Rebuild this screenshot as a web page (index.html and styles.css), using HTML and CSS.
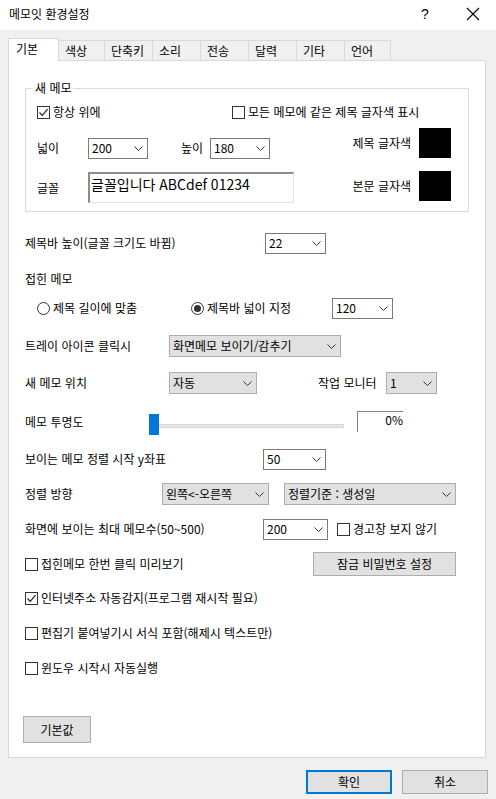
FILE: index.html
```html
<!DOCTYPE html>
<html lang="ko">
<head>
    <meta charset="UTF-8">
    <meta name="viewport" content="width=device-width, initial-scale=1.0">
    <title>메모잇 환경설정</title>
    <link rel="stylesheet" href="styles.css">
</head>
<body>

    <!-- Title bar -->
    <div class="titlebar">
        <span class="title">메모잇 환경설정</span>
        <span class="help">?</span>
        <span class="close">
            <svg width="14" height="14" viewBox="0 0 14 14"><path d="M1 1L13 13M13 1L1 13" stroke="#000" stroke-width="1.1" fill="none"/></svg>
        </span>
    </div>

    <!-- Tabs -->
    <div class="tabs">
        <div class="tab active t50">기본</div>
        <div class="tab t46">색상</div>
        <div class="tab t48">단축키</div>
        <div class="tab t48">소리</div>
        <div class="tab t48">전송</div>
        <div class="tab t48">달력</div>
        <div class="tab t48">기타</div>
        <div class="tab t46">언어</div>
    </div>

    <!-- Basic settings page -->
    <div class="panel">

        <fieldset class="group">
            <legend>새 메모</legend>
            <div class="group-top">
                <label class="check always-top"><span class="box"><svg width="11" height="11" viewBox="0 0 11 11"><path d="M1.5 5.5L4.2 8.3L9.6 2.2" stroke="#222" stroke-width="1.2" fill="none"/></svg></span>항상 위에</label>
                <label class="check"><span class="box"></span>모든 메모에 같은 제목 글자색 표시</label>
            </div>
            <div class="group-body">
                <div class="group-left">
                    <div class="size-row">
                        <span class="lbl-short">넓이</span>
                        <div class="combo w60"><span>200</span><svg class="chev" width="9" height="5" viewBox="0 0 9 5"><path d="M0.5 0.5L4.5 4.5L8.5 0.5" stroke="#333" fill="none"/></svg></div>
                        <span class="lbl-height">높이</span>
                        <div class="combo w60"><span>180</span><svg class="chev" width="9" height="5" viewBox="0 0 9 5"><path d="M0.5 0.5L4.5 4.5L8.5 0.5" stroke="#333" fill="none"/></svg></div>
                    </div>
                    <div class="font-row">
                        <span class="lbl-short">글꼴</span>
                        <div class="font-box">글꼴입니다 ABCdef 01234</div>
                    </div>
                </div>
                <div class="group-right">
                    <div class="color-row"><span>제목 글자색</span><span class="swatch"></span></div>
                    <div class="color-row"><span>본문 글자색</span><span class="swatch"></span></div>
                </div>
            </div>
        </fieldset>

        <div class="row r-titlebar">
            <span class="lbl w240">제목바 높이(글꼴 크기도 바뀜)</span>
            <div class="combo w61"><span>22</span><svg class="chev" width="9" height="5" viewBox="0 0 9 5"><path d="M0.5 0.5L4.5 4.5L8.5 0.5" stroke="#333" fill="none"/></svg></div>
        </div>

        <div class="row r-folded">
            <span class="lbl">접힌 메모</span>
        </div>

        <div class="row r-radios">
            <label class="radio first"><span class="dot"></span>제목 길이에 맞춤</label>
            <label class="radio"><span class="dot on"></span>제목바 넓이 지정</label>
            <div class="combo w61 fold-width"><span>120</span><svg class="chev" width="9" height="5" viewBox="0 0 9 5"><path d="M0.5 0.5L4.5 4.5L8.5 0.5" stroke="#333" fill="none"/></svg></div>
        </div>

        <div class="row r-tray">
            <span class="lbl w144">트레이 아이콘 클릭시</span>
            <div class="combo list w172"><span>화면메모 보이기/감추기</span><svg class="chev" width="9" height="5" viewBox="0 0 9 5"><path d="M0.5 0.5L4.5 4.5L8.5 0.5" stroke="#333" fill="none"/></svg></div>
        </div>

        <div class="row r-position">
            <span class="lbl w144">새 메모 위치</span>
            <div class="combo list w88"><span>자동</span><svg class="chev" width="9" height="5" viewBox="0 0 9 5"><path d="M0.5 0.5L4.5 4.5L8.5 0.5" stroke="#333" fill="none"/></svg></div>
            <span class="lbl monitor-lbl">작업 모니터</span>
            <div class="combo list w51"><span>1</span><svg class="chev" width="9" height="5" viewBox="0 0 9 5"><path d="M0.5 0.5L4.5 4.5L8.5 0.5" stroke="#333" fill="none"/></svg></div>
        </div>

        <div class="row r-opacity">
            <span class="lbl w124">메모 투명도</span>
            <div class="slider">
                <div class="track"></div>
                <div class="thumb"></div>
            </div>
            <div class="percent">0%</div>
        </div>

        <div class="row r-ystart">
            <span class="lbl w238">보이는 메모 정렬 시작 y좌표</span>
            <div class="combo w63"><span>50</span><svg class="chev" width="9" height="5" viewBox="0 0 9 5"><path d="M0.5 0.5L4.5 4.5L8.5 0.5" stroke="#333" fill="none"/></svg></div>
        </div>

        <div class="row r-sort">
            <span class="lbl w137">정렬 방향</span>
            <div class="combo list w107"><span>왼쪽&lt;-오른쪽</span><svg class="chev" width="9" height="5" viewBox="0 0 9 5"><path d="M0.5 0.5L4.5 4.5L8.5 0.5" stroke="#333" fill="none"/></svg></div>
            <div class="combo list w172 sort-by"><span>정렬기준 : 생성일</span><svg class="chev" width="9" height="5" viewBox="0 0 9 5"><path d="M0.5 0.5L4.5 4.5L8.5 0.5" stroke="#333" fill="none"/></svg></div>
        </div>

        <div class="row r-max">
            <span class="lbl w238">화면에 보이는 최대 메모수(50~500)</span>
            <div class="combo w65"><span>200</span><svg class="chev" width="9" height="5" viewBox="0 0 9 5"><path d="M0.5 0.5L4.5 4.5L8.5 0.5" stroke="#333" fill="none"/></svg></div>
            <label class="check no-warn"><span class="box"></span>경고창 보지 않기</label>
        </div>

        <div class="row r-preview">
            <label class="check"><span class="box"></span>접힌메모 한번 클릭 미리보기</label>
            <button class="btn lock-btn">잠금 비밀번호 설정</button>
        </div>

        <div class="row r-url">
            <label class="check"><span class="box"><svg width="11" height="11" viewBox="0 0 11 11"><path d="M1.5 5.5L4.2 8.3L9.6 2.2" stroke="#222" stroke-width="1.2" fill="none"/></svg></span>인터넷주소 자동감지(프로그램 재시작 필요)</label>
        </div>

        <div class="row r-paste">
            <label class="check"><span class="box"></span>편집기 붙여넣기시 서식 포함(해제시 텍스트만)</label>
        </div>

        <div class="row r-startup">
            <label class="check"><span class="box"></span>윈도우 시작시 자동실행</label>
        </div>

        <button class="btn default-btn">기본값</button>
    </div>

    <!-- Dialog buttons -->
    <div class="dialog-buttons">
        <button class="btn ok-btn">확인</button>
        <button class="btn cancel-btn">취소</button>
    </div>

</body>
</html>
```

FILE: styles.css
```css
* {
    box-sizing: border-box;
}

body {
    margin: 0;
    width: 496px;
    height: 799px;
    background-color: #f0f0f0;
    font-family: "Noto Sans CJK KR", "Noto Sans", sans-serif;
    font-size: 12px;
    line-height: 16px;
    color: #000;
    overflow: hidden;
}

/* Title bar */
.titlebar {
    height: 30px;
    background: #fff;
    display: flex;
    align-items: center;
    padding-left: 9px;
}

.title {
    flex: 1;
    margin-top: -2px;
}

.help {
    width: 14px;
    margin-right: 31px;
    font-family: "Liberation Sans", sans-serif;
    font-size: 14px;
    margin-top: -2px;
}

.close {
    width: 14px;
    height: 14px;
    margin-right: 16px;
    margin-top: -3px;
}

.close svg {
    display: block;
}

/* Tabs */
.tabs {
    display: flex;
    align-items: flex-end;
    height: 22px;
    margin-top: 8px;
    padding-left: 8px;
    position: relative;
    z-index: 1;
}

.tab {
    height: 20px;
    padding-left: 6px;
    border: 1px solid #d9d9d9;
    border-bottom: none;
    margin-left: -1px;
    background: #f0f0f0;
    line-height: 19px;
}

.tab.active {
    height: 23px;
    margin-left: 0;
    margin-bottom: -1px;
    background: #fff;
    padding-left: 7px;
    line-height: 19px;
}

.t50 { width: 51px; }
.t46 { width: 47px; }
.t48 { width: 49px; }

/* Page */
.panel {
    margin-left: 8px;
    width: 478px;
    height: 698px;
    background: #fff;
    border: 1px solid #d9d9d9;
    padding: 0 16px 14px;
    display: flex;
    flex-direction: column;
}

/* Group box */
.group {
    margin: 19px 0 0;
    padding: 0 17px 8px 11px;
    border: 1px solid #dcdcdc;
    min-width: 0;
}

.group legend {
    margin-left: -4px;
    padding: 0 2px;
    line-height: 16px;
}

.group-top {
    height: 32px;
    display: flex;
    align-items: center;
}

.always-top {
    width: 195px;
}

.group-body {
    display: flex;
    justify-content: space-between;
}

.size-row {
    height: 40px;
    display: flex;
    align-items: center;
}

.font-row {
    margin-top: 4px;
    display: flex;
    align-items: center;
}

.lbl-short {
    width: 51px;
}

.lbl-height {
    margin-left: 33px;
    width: 29px;
}

.font-box {
    width: 206px;
    height: 31px;
    border-style: solid;
    border-width: 2px 1px 1px 2px;
    border-color: #8c8c8c #e3e3e3 #e3e3e3 #8c8c8c;
    font-size: 14px;
    line-height: 18px;
    padding: 1px 0 0 1px;
}

.group-right {
    display: flex;
    flex-direction: column;
    gap: 13px;
}

.color-row {
    height: 30px;
    display: flex;
    align-items: center;
    justify-content: flex-end;
    gap: 8px;
}

.swatch {
    width: 32px;
    height: 30px;
    background: #000;
}

/* Rows */
.row {
    height: 24px;
    display: flex;
    align-items: center;
    flex-shrink: 0;
}

.r-titlebar { margin-top: 19px; }
.r-folded { margin-top: 12px; }
.r-radios { margin-top: 5px; padding-left: 12px; }
.r-tray { margin-top: 14px; }
.r-position { margin-top: 13px; }
.r-opacity { margin-top: 15px; }
.r-ystart { margin-top: 13px; }
.r-sort { margin-top: 11px; }
.r-max { margin-top: 11px; }
.r-preview { margin-top: 11px; }
.r-url { margin-top: 10px; }
.r-paste { margin-top: 11px; }
.r-startup { margin-top: 11px; }

.w124 { width: 124px; }
.w137 { width: 137px; }
.w144 { width: 144px; }
.w238 { width: 238px; }
.w240 { width: 240px; }

/* Combo boxes */
.combo {
    height: 21px;
    display: flex;
    align-items: center;
    justify-content: space-between;
    border: 1px solid #7a7a7a;
    background: #fff;
    padding: 0 4px 0 3px;
    white-space: nowrap;
}

.combo.list {
    height: 22px;
    background: #e1e1e1;
    border-color: #adadad;
}

.chev {
    display: block;
    flex-shrink: 0;
}

.w51 { width: 51px; }
.w60 { width: 60px; }
.w61 { width: 61px; }
.w63 { width: 63px; }
.w65 { width: 65px; }
.w88 { width: 88px; }
.w107 { width: 107px; }
.w172 { width: 172px; }

.fold-width {
    margin-left: auto;
    margin-right: 76px;
}

.monitor-lbl {
    margin-left: 61px;
    width: 68px;
}

.sort-by {
    margin-left: 15px;
}

/* Checkboxes and radios */
.check,
.radio {
    display: flex;
    align-items: center;
    white-space: nowrap;
}

.box {
    width: 13px;
    height: 13px;
    border: 1px solid #333;
    background: #fff;
    margin-right: 3px;
    display: flex;
    align-items: center;
    justify-content: center;
}

.box svg {
    display: block;
}

.dot {
    width: 13px;
    height: 13px;
    border: 1px solid #333;
    border-radius: 50%;
    margin-right: 3px;
    position: relative;
}

.dot.on::after {
    content: "";
    position: absolute;
    left: 2px;
    top: 2px;
    width: 7px;
    height: 7px;
    border-radius: 50%;
    background: #333;
}

.radio.first {
    width: 154px;
}

.no-warn {
    margin-left: 9px;
}

/* Opacity slider */
.slider {
    position: relative;
    width: 195px;
    height: 24px;
    margin-top: 8px;
}

.track {
    margin-top: 10px;
    height: 4px;
    background: #e7e7e7;
    border: 1px solid #d6d6d6;
}

.thumb {
    position: absolute;
    left: 0;
    top: 0;
    width: 10px;
    height: 21px;
    background: #0078d7;
}

.percent {
    margin-left: 13px;
    width: 46px;
    height: 21px;
    border-top: 1px solid #828282;
    border-left: 1px solid #828282;
    text-align: right;
    line-height: 15px;
    align-self: flex-start;
    margin-top: 1px;
}

/* Buttons */
.btn {
    font-family: inherit;
    font-size: 12px;
    line-height: 16px;
    color: #000;
    background: #e1e1e1;
    border: 1px solid #adadad;
    padding: 0;
}

.lock-btn {
    margin-left: auto;
    margin-right: 13px;
    width: 143px;
    height: 24px;
}

.default-btn {
    margin-top: auto;
    margin-left: -2px;
    width: 68px;
    height: 27px;
    align-self: flex-start;
}

.dialog-buttons {
    display: flex;
    justify-content: flex-end;
    gap: 10px;
    margin-top: 12px;
    padding-right: 8px;
}

.ok-btn,
.cancel-btn {
    width: 86px;
    height: 24px;
}

.ok-btn {
    border: 2px solid #0078d7;
}
```
